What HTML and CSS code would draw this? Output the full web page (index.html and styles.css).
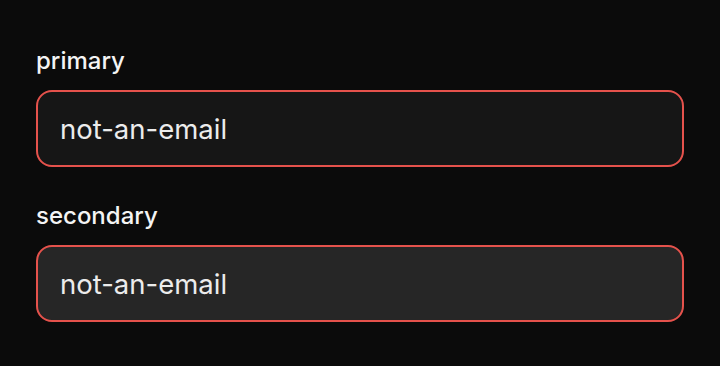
FILE: index.html
```html
<!DOCTYPE html>
<html>
<head>
<meta charset="utf-8">
<link rel="stylesheet" href="styles.css">
</head>
<body>
<div class="form">
  <div class="field">
    <label class="label">primary</label>
    <div class="input input-primary">not-an-email</div>
  </div>
  <div class="field">
    <label class="label">secondary</label>
    <div class="input input-secondary">not-an-email</div>
  </div>
</div>
</body>
</html>
```
FILE: styles.css
```css
html, body {
  margin: 0;
  padding: 0;
  background: #0b0b0b;
  font-family: Inter, "Noto Sans", sans-serif;
  color: #f2f2f2;
}
.form {
  padding: 46px 36px 0 36px;
  display: flex;
  flex-direction: column;
  gap: 34px;
}
.field {
  display: flex;
  flex-direction: column;
  gap: 15px;
}
.label {
  font-size: 24px;
  line-height: 29px;
  font-weight: 500;
  color: #f4f4f4;
}
.input {
  box-sizing: border-box;
  height: 77px;
  border: 2px solid #e5524c;
  border-radius: 16px;
  padding: 0 22px;
  display: flex;
  align-items: center;
  font-size: 27.5px;
  color: #ececec;
}
.input-primary { background: #161616; }
.input-secondary { background: #262626; }
```
